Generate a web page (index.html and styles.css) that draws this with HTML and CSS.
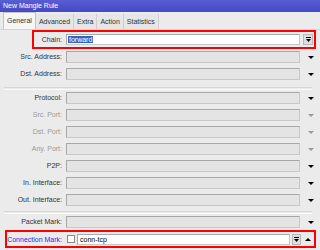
FILE: index.html
```html
<!DOCTYPE html>
<html lang="en">
<head>
    <meta charset="UTF-8">
    <title>New Mangle Rule</title>
    <link rel="stylesheet" href="styles.css">
</head>
<body>

<div class="titlebar">New Mangle Rule</div>

<div class="tabs">
    <span class="tab active">General</span>
    <span class="tab">Advanced</span>
    <span class="tab">Extra</span>
    <span class="tab">Action</span>
    <span class="tab">Statistics</span>
</div>

<div class="panel">
    <div class="row chain">
        <label>Chain:</label>
        <div class="field white"><span class="sel">forward</span></div>
        <span class="combo"><svg width="5" height="6" viewBox="0 0 5 6"><path d="M0 0.5h5" stroke="#000" stroke-width="1"/><path d="M0 2h5l-2.5 3z" fill="#000"/></svg></span>
        <div class="mark"></div>
    </div>

    <div class="row">
        <label>Src. Address:</label>
        <div class="field"></div>
        <span class="arrow"><svg width="6" height="3" viewBox="0 0 6 3"><path d="M0 0h6l-3 3z"/></svg></span>
    </div>
    <div class="row">
        <label>Dst. Address:</label>
        <div class="field"></div>
        <span class="arrow"><svg width="6" height="3" viewBox="0 0 6 3"><path d="M0 0h6l-3 3z"/></svg></span>
    </div>

    <div class="sep"></div>

    <div class="row">
        <label>Protocol:</label>
        <div class="field"></div>
        <span class="arrow"><svg width="6" height="3" viewBox="0 0 6 3"><path d="M0 0h6l-3 3z"/></svg></span>
    </div>
    <div class="row off">
        <label>Src. Port:</label>
        <div class="field"></div>
        <span class="arrow"><svg width="6" height="3" viewBox="0 0 6 3"><path d="M0 0h6l-3 3z"/></svg></span>
    </div>
    <div class="row off">
        <label>Dst. Port:</label>
        <div class="field"></div>
        <span class="arrow"><svg width="6" height="3" viewBox="0 0 6 3"><path d="M0 0h6l-3 3z"/></svg></span>
    </div>
    <div class="row off">
        <label>Any. Port:</label>
        <div class="field"></div>
        <span class="arrow"><svg width="6" height="3" viewBox="0 0 6 3"><path d="M0 0h6l-3 3z"/></svg></span>
    </div>
    <div class="row">
        <label>P2P:</label>
        <div class="field"></div>
        <span class="arrow"><svg width="6" height="3" viewBox="0 0 6 3"><path d="M0 0h6l-3 3z"/></svg></span>
    </div>
    <div class="row">
        <label>In. Interface:</label>
        <div class="field"></div>
        <span class="arrow"><svg width="6" height="3" viewBox="0 0 6 3"><path d="M0 0h6l-3 3z"/></svg></span>
    </div>
    <div class="row">
        <label>Out. Interface:</label>
        <div class="field"></div>
        <span class="arrow"><svg width="6" height="3" viewBox="0 0 6 3"><path d="M0 0h6l-3 3z"/></svg></span>
    </div>

    <div class="sep sep2"></div>

    <div class="row packet">
        <label>Packet Mark:</label>
        <div class="field"></div>
        <span class="arrow"><svg width="6" height="3" viewBox="0 0 6 3"><path d="M0 0h6l-3 3z"/></svg></span>
    </div>

    <div class="row connmark">
        <label class="link">Connection Mark:</label>
        <span class="check"></span>
        <div class="field white short">conn-tcp</div>
        <span class="combo small"><svg width="5" height="6" viewBox="0 0 5 6"><path d="M0 0.5h5" stroke="#000" stroke-width="1"/><path d="M0 2h5l-2.5 3z" fill="#000"/></svg></span>
        <span class="arrow up"><svg width="6" height="3" viewBox="0 0 6 3"><path d="M0 3h6l-3-3z"/></svg></span>
        <div class="mark"></div>
    </div>
</div>

</body>
</html>
```

FILE: styles.css
```css
body {
    margin: 0;
    width: 320px;
    height: 250px;
    overflow: hidden;
    background-color: #ebebeb;
    font-family: "Liberation Sans", Arial, sans-serif;
    font-size: 7px;
    color: #222;
}
.titlebar {
    height: 12px;
    line-height: 12px;
    padding-left: 3px;
    color: #fff;
    background: linear-gradient(#5a5ed4, #4549c2);
}
.tabs {
    height: 18px;
    display: flex;
    align-items: flex-end;
    padding-left: 3px;
    box-sizing: border-box;
    border-bottom: 1px solid #d4d4d4;
}
.tab {
    height: 15px;
    line-height: 15px;
    padding: 0 3px;
    border-right: 1px solid #cfcfcf;
    background-color: #e6e6e6;
    color: #333;
}
.tab.active {
    height: 16px;
    line-height: 16px;
    background-color: #f6f6f6;
    border: 1px solid #c4c4c4;
    border-bottom: none;
}
.panel {
    display: flex;
    flex-direction: column;
}
.row {
    position: relative;
    height: 17px;
    display: flex;
    align-items: flex-start;
    padding-top: 2px;
    box-sizing: border-box;
}
.row label {
    width: 62px;
    height: 12px;
    line-height: 12px;
    text-align: right;
    margin-right: 4px;
    flex-shrink: 0;
    color: #333;
}
.field {
    width: 234px;
    height: 12px;
    line-height: 10px;
    box-sizing: border-box;
    background-color: #e4e4e4;
    border: 1px solid #a8a8a8;
    border-right-color: #c8c8c8;
    border-bottom-color: #c8c8c8;
    padding-left: 2px;
    color: #000;
}
.field.white {
    background-color: #fff;
}
.arrow {
    width: 14px;
    height: 12px;
    margin-left: 4px;
    display: flex;
    align-items: center;
    justify-content: center;
}
.arrow svg {
    fill: #000;
}
.off label {
    color: #9a9a9a;
}
.off .arrow svg {
    fill: #9a9a9a;
}
.chain {
    height: 19px;
    padding-top: 4px;
}
.chain .field {
    height: 11px;
    padding-left: 1px;
}
.sel {
    background-color: #3162c4;
    color: #fff;
    padding: 0 1px;
}
.combo {
    width: 10px;
    height: 11px;
    margin-left: 3px;
    box-sizing: border-box;
    background-color: #dedede;
    border: 1px solid #b8b8b8;
    display: flex;
    align-items: center;
    justify-content: center;
}
.mark {
    position: absolute;
    left: 32px;
    right: 4px;
    top: 0;
    bottom: 0;
    border: 2px solid #f00;
}
.sep {
    height: 7px;
    box-sizing: border-box;
    border-bottom: 1px solid #fafafa;
    margin: 0 8px 0 4px;
    position: relative;
}
.sep::after {
    content: "";
    position: absolute;
    left: 0;
    right: 0;
    bottom: 1px;
    border-top: 1px solid #d6d6d6;
}
.sep.sep2 {
    height: 5px;
}
.packet {
    height: 16px;
}
.connmark {
    height: 18px;
    padding-top: 4px;
}
.connmark .mark {
    left: 5px;
}
.link {
    color: #2c2ce0 !important;
}
.check {
    width: 8px;
    height: 8px;
    margin: 1px 2px 0 1px;
    box-sizing: border-box;
    background-color: #fff;
    border: 1px solid #8a8a8a;
}
.connmark .field {
    width: 213px;
    height: 11px;
}
.combo.small {
    width: 9px;
    margin-left: 2px;
}
.arrow.up {
    height: 11px;
    margin-left: 0;
    width: 14px;
}
```
